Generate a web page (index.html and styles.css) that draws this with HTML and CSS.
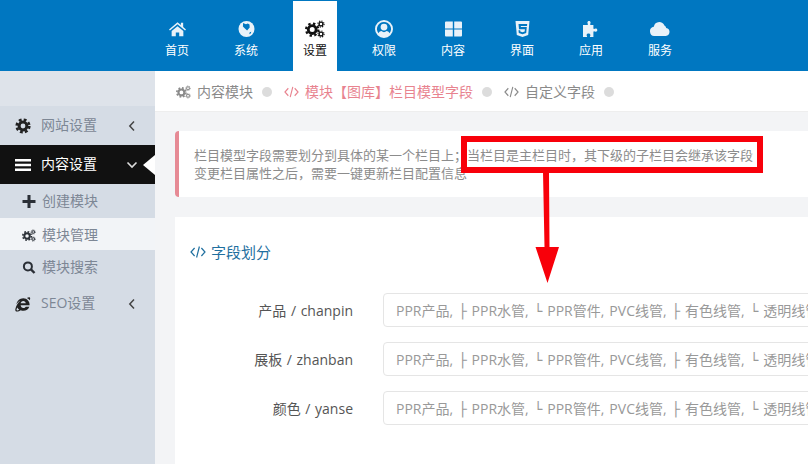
FILE: index.html
```html
<!DOCTYPE html>
<html lang="zh-CN">
<head>
<meta charset="utf-8">
<title>栏目模型字段</title>
<link rel="stylesheet" href="styles.css">
</head>
<body>
<svg class="defs" width="0" height="0" aria-hidden="true">
  <defs>
    <symbol id="cogs" viewBox="0 0 20 18">
      <circle cx="7.2" cy="9.6" r="3.9" fill="none" stroke="currentColor" stroke-width="2.8"/>
      <circle cx="7.2" cy="9.6" r="6.1" fill="none" stroke="currentColor" stroke-width="2.2" stroke-dasharray="2.4 2.4"/>
      <circle cx="16" cy="4" r="1.9" fill="none" stroke="currentColor" stroke-width="1.4"/>
      <circle cx="16" cy="4" r="3.1" fill="none" stroke="currentColor" stroke-width="1.1" stroke-dasharray="1.2 1.24"/>
      <circle cx="16" cy="14" r="1.9" fill="none" stroke="currentColor" stroke-width="1.4"/>
      <circle cx="16" cy="14" r="3.1" fill="none" stroke="currentColor" stroke-width="1.1" stroke-dasharray="1.2 1.24"/>
    </symbol>
    <symbol id="code" viewBox="0 0 16 14">
      <path d="M4.6 3 1 7l3.6 4M11.4 3 15 7l-3.600 4M9.400 1.500 6.600 12.500" fill="none" stroke="currentColor" stroke-width="1.2"/>
    </symbol>
    <symbol id="left" viewBox="0 0 8 12">
      <path d="M6 1.500 1.800 6 6 10.500" fill="none" stroke="currentColor" stroke-width="1.5"/>
    </symbol>
  </defs>
</svg>

<header class="topbar">
  <nav class="topnav">
    <a class="topnav-item">
      <svg class="topnav-icon" viewBox="0 0 18 16"><path fill="currentColor" d="M9 .8 0 8.400l1 1.200 8-6.700 8 6.700 1-1.200-3-2.600V1.400h-2.400v2.300zM2.800 10.200V15.600h4.400v-4h3.600v4h4.400v-5.400L9 5z"/></svg>
      <span>首页</span>
    </a>
    <a class="topnav-item">
      <svg class="topnav-icon" viewBox="0 0 16 16"><circle cx="8" cy="8" r="8" fill="currentColor"/><path fill="#0077c1" d="M4.600 1.900 7.400 3.200 9.300 2.600 11 3.400 11.200 6.600 8.600 9.600 6.400 7.400 4.400 5.600zM11.200 11.200l1.600-.4-.6 1.800-1.400.6z"/></svg>
      <span>系统</span>
    </a>
    <a class="topnav-item is-active">
      <svg class="topnav-icon topnav-icon-cogs"><use href="#cogs"/></svg>
      <span>设置</span>
    </a>
    <a class="topnav-item">
      <svg class="topnav-icon topnav-icon-user" viewBox="0 0 18 18"><path fill="currentColor" fill-rule="evenodd" d="M9 0a9 9 0 1 0 0 18A9 9 0 0 0 9 0zm0 2a7 7 0 0 1 5.600 11.200C13.800 11.900 12.600 11 11.600 11a3.900 3.900 0 0 1-5.200 0c-1 0-2.200.9-3 2.200A7 7 0 0 1 9 2zm0 1.700a3.400 3.400 0 1 0 0 6.800 3.400 3.400 0 0 0 0-6.800z"/></svg>
      <span>权限</span>
    </a>
    <a class="topnav-item">
      <svg class="topnav-icon" viewBox="0 0 17 15"><path fill="currentColor" d="M0 1a1 1 0 0 1 1-1h6.800v6.900H0zM9.200 0H16a1 1 0 0 1 1 1v5.900H9.200zM0 8.100h7.800V15H1a1 1 0 0 1-1-1zM9.200 8.100H17V14a1 1 0 0 1-1 1H9.200z"/></svg>
      <span>内容</span>
    </a>
    <a class="topnav-item">
      <svg class="topnav-icon" viewBox="0 0 14 16"><path fill="currentColor" fill-rule="evenodd" d="M0 0h14l-1.300 14L7 16l-5.700-2zM3 3l.5 5.300h5.900l-.2 2.300-2.200.7-2.200-.7-.1-1.300H3l.3 2.800L7 13.300l3.700-1.200.6-6H5.400l-.1-1.100h6.200l.2-2z"/></svg>
      <span>界面</span>
    </a>
    <a class="topnav-item">
      <svg class="topnav-icon" viewBox="0 0 17 16"><path fill="currentColor" d="M4.400 1.600C4.400.7 5.100 0 6 0s1.600.7 1.600 1.600c0 .9-.5 1.300-.5 1.900 0 .3.200.4.800.4h2.500v3.400c0 .5.300.7.600.7.500 0 1-.5 1.800-.5.900 0 1.500.7 1.500 1.600s-.6 1.600-1.500 1.600c-.8 0-1.300-.5-1.800-.5-.3 0-.6.200-.6.700V16H6.900c0-.9.500-1.300.5-2 0-1-.8-1.600-1.900-1.600S3.600 13 3.600 14c0 .7.500 1.100.5 2H0V3.900h3.600c.7 0 1.300-.1 1.300-.5 0-.6-.5-.9-.5-1.800z"/></svg>
      <span>应用</span>
    </a>
    <a class="topnav-item">
      <svg class="topnav-icon topnav-icon-cloud" viewBox="0 0 20 14"><path fill="currentColor" d="M5 14a4.700 4.700 0 0 1-1.200-9.300A5.800 5.800 0 0 1 9.200 0c2.400 0 4.400 1.400 5.200 3.500a3 3 0 0 1 1.800 2.400A4.100 4.100 0 0 1 15.800 14z"/></svg>
      <span>服务</span>
    </a>
  </nav>
</header>

<div class="layout">
  <aside class="sidebar">
    <ul class="menu">
      <li class="menu-item">
        <svg class="menu-icon" viewBox="0 0 16 16"><circle cx="8" cy="8" r="3.900" fill="none" stroke="currentColor" stroke-width="3"/><circle cx="8" cy="8" r="6.300" fill="none" stroke="currentColor" stroke-width="2.600" stroke-dasharray="2.800 2.140"/></svg>
        <span class="menu-label">网站设置</span>
        <svg class="menu-caret"><use href="#left"/></svg>
      </li>
      <li class="menu-item is-open">
        <svg class="menu-icon" viewBox="0 0 16 14"><path fill="currentColor" d="M0 1h16v2.400H0zM0 5.800h16v2.400H0zM0 10.600h16V13H0z"/></svg>
        <span class="menu-label">内容设置</span>
        <svg class="menu-caret" viewBox="0 0 12 8"><path d="M1.500 1.500 6 6l4.500-4.500" fill="none" stroke="currentColor" stroke-width="1.600"/></svg>
      </li>
      <li class="submenu-item">
        <svg class="sub-icon" viewBox="0 0 12 12"><path fill="currentColor" d="M4.600 0h2.800v4.600H12v2.800H7.400V12H4.600V7.400H0V4.600h4.600z"/></svg>
        <span>创建模块</span>
      </li>
      <li class="submenu-item is-current">
        <svg class="sub-icon"><use href="#cogs"/></svg>
        <span>模块管理</span>
      </li>
      <li class="submenu-item">
        <svg class="sub-icon" viewBox="0 0 13 13"><circle cx="5.400" cy="5.400" r="4" fill="none" stroke="currentColor" stroke-width="2"/><path d="M8.200 8.200 12 12" stroke="currentColor" stroke-width="2.400"/></svg>
        <span>模块搜索</span>
      </li>
      <li class="menu-item">
        <svg class="menu-icon" viewBox="0 0 17 16"><path fill="currentColor" fill-rule="evenodd" d="M8.800 2C5 2 2 5 1.500 8.600 2.400 7 4 5.300 5.800 4.400 3.200 6.800 1.200 10 .4 13.200c-.4 1.700.3 2.800 1.800 2.800 1.200 0 2.700-.6 3.900-1.400 1 .5 1.800.7 2.900.7 2.900 0 5.300-1.700 6.200-4.400h-3.800c-.5.9-1.400 1.400-2.500 1.400-1.600 0-2.800-1.200-2.900-2.900h9.500c.4-3.800-2.600-7.400-6.700-7.400zM6 7.200c.1-1.500 1.300-2.500 2.800-2.500 1.400 0 2.600 1 2.700 2.500zM1.900 14.600c-.5-.5-.2-1.700.5-3 .5 1 1.200 1.800 2.100 2.400-1.100.7-2 1-2.600.6zM12.600 1.600C14 .9 15.200.7 15.800 1.200c.5.500.4 1.600-.1 2.900-.7-1-1.700-1.900-3.100-2.500z"/></svg>
        <span class="menu-label">SEO设置</span>
        <svg class="menu-caret"><use href="#left"/></svg>
      </li>
    </ul>
  </aside>

  <main class="content">
    <div class="crumbs">
      <span class="crumb"><svg class="crumb-icon"><use href="#cogs"/></svg><span>内容模块</span><i class="crumb-dot"></i></span>
      <span class="crumb is-current"><svg class="crumb-icon"><use href="#code"/></svg><span>模块【图库】栏目模型字段</span><i class="crumb-dot"></i></span>
      <span class="crumb"><svg class="crumb-icon"><use href="#code"/></svg><span>自定义字段</span><i class="crumb-dot"></i></span>
    </div>

    <div class="page">
      <div class="notice">
        <p>栏目模型字段需要划分到具体的某一个栏目上；当栏目是主栏目时，其下级的子栏目会继承该字段</p>
        <p>变更栏目属性之后，需要一键更新栏目配置信息</p>
      </div>

      <section class="card">
        <h2 class="card-title"><svg class="card-title-icon"><use href="#code"/></svg>字段划分</h2>
        <form class="form">
          <div class="form-row">
            <label class="form-label">产品 / chanpin</label>
            <input class="form-input" type="text" placeholder="PPR产品, ├ PPR水管, └ PPR管件, PVC线管, ├ 有色线管, └ 透明线管">
          </div>
          <div class="form-row">
            <label class="form-label">展板 / zhanban</label>
            <input class="form-input" type="text" placeholder="PPR产品, ├ PPR水管, └ PPR管件, PVC线管, ├ 有色线管, └ 透明线管">
          </div>
          <div class="form-row">
            <label class="form-label">颜色 / yanse</label>
            <input class="form-input" type="text" placeholder="PPR产品, ├ PPR水管, └ PPR管件, PVC线管, ├ 有色线管, └ 透明线管">
          </div>
        </form>
      </section>
    </div>
  </main>
</div>

<svg class="annotation" width="808" height="464" viewBox="0 0 808 464" aria-hidden="true">
  <rect x="464" y="139" width="296" height="31" fill="none" stroke="#f8000a" stroke-width="6"/>
  <path fill="#f8000a" d="M543 172h6l.5 75h9.500l-11.500 36-12-36h9z"/>
</svg>
</body>
</html>
```
FILE: styles.css
```css
* { box-sizing: border-box; }

html, body {
  margin: 0;
  width: 808px;
  height: 464px;
  overflow: hidden;
}

body {
  position: relative;
  display: flex;
  flex-direction: column;
  font-family: "Open Sans", "DejaVu Sans", "Noto Sans CJK SC", sans-serif;
  font-size: 14px;
  line-height: 20px;
  color: #666;
  background: #f3f4f6;
}

.defs { position: absolute; }

/* Top bar */
.topbar {
  flex: none;
  height: 71px;
  padding-top: 1px;
  background: #0077c1;
}

.topnav {
  display: flex;
  gap: 25px;
  height: 70px;
  padding-left: 155px;
}

.topnav-item {
  display: flex;
  flex-direction: column;
  align-items: center;
  width: 44px;
  height: 70px;
  padding-top: 20px;
  color: #fff;
  font-size: 12px;
  line-height: 16px;
}

.topnav-item span { margin-top: 6px; }

.topnav-item.is-active {
  background: #fff;
  color: #111;
}

.topnav-icon {
  flex: none;
  width: 17px;
  height: 16px;
  color: #e9f2f9;
}

.is-active .topnav-icon { color: #111; }
.topnav-icon-cogs { width: 20px; height: 18px; margin: -1px 0; }
.topnav-icon-cloud { width: 20px; height: 14px; margin: 1px 0; }
.topnav-icon-user { width: 18px; height: 18px; margin: -1px 0; }

/* Layout */
.layout {
  flex: 1;
  display: flex;
  min-height: 0;
}

/* Sidebar */
.sidebar {
  flex: none;
  width: 155px;
  padding-top: 35px;
  background: linear-gradient(#dee3ea 35px, #d5dce5 35px);
}

.menu {
  margin: 0;
  padding: 0;
  list-style: none;
}

.menu-item {
  position: relative;
  display: flex;
  align-items: center;
  height: 39px;
  padding-left: 15px;
  color: #7d8795;
}

.menu-icon {
  flex: none;
  width: 16px;
  height: 16px;
  margin-right: 10px;
  color: #222;
}

.menu-label {
  flex: 1;
  padding-bottom: 2px;
}

.menu-caret {
  flex: none;
  width: 8px;
  height: 12px;
  margin-right: 19px;
  color: #444;
}

.menu-item.is-open {
  background: #111;
  color: #fff;
}

.is-open .menu-icon { color: #fff; height: 14px; }
.is-open .menu-caret { width: 12px; height: 8px; margin-right: 17px; color: #ddd; }

.is-open::after {
  content: "";
  position: absolute;
  right: 0;
  top: 10px;
  border-style: solid;
  border-width: 10px 12px 10px 0;
  border-color: transparent #fff transparent transparent;
}

.submenu-item {
  display: flex;
  align-items: center;
  height: 33px;
  padding-left: 22px;
  color: #7d8795;
}

.submenu-item.is-current {
  background: #f2f4f7;
  height: 32px;
  padding-top: 2px;
}

.submenu-item:nth-child(3), .submenu-item:nth-child(5) { height: 34px; }

.sub-icon {
  flex: none;
  width: 14px;
  height: 13px;
  margin-right: 6px;
  color: #2a2f36;
}

/* Main */
.content {
  flex: 1;
  min-width: 0;
  overflow: hidden;
}

.crumbs {
  display: flex;
  align-items: center;
  gap: 12px;
  height: 41px;
  padding-top: 2px;
  padding-left: 21px;
  background: #fff;
  border-bottom: 1px solid #eee;
  color: #8a8a8a;
}

.crumb {
  display: flex;
  align-items: center;
  white-space: nowrap;
}

.crumb.is-current { color: #e8838f; }

.crumb-icon {
  flex: none;
  width: 15px;
  height: 14px;
  margin-right: 6px;
}

.crumb-dot {
  flex: none;
  width: 10px;
  height: 10px;
  margin-left: 9px;
  border-radius: 50%;
  background: #dcdcdc;
}

.page {
  padding: 19px 0 0 20px;
  width: 760px;
}

.notice {
  width: 720px;
  height: 66px;
  padding: 15px 0 0 15px;
  border-left: 4px solid #e68a95;
  border-radius: 4px;
  background: #fff;
  color: #8c8c8c;
  font-size: 13px;
  line-height: 18px;
  white-space: nowrap;
}

.notice p { margin: 0; }

.card {
  width: 720px;
  height: 260px;
  margin-top: 20px;
  padding-top: 24px;
  background: #fff;
}

.card-title {
  display: flex;
  align-items: center;
  height: 22px;
  margin: 0 0 30px;
  padding-left: 15px;
  color: #1f6f9f;
  font-size: 15px;
  font-weight: 400;
}

.card-title-icon {
  flex: none;
  width: 16px;
  height: 14px;
  margin-right: 5px;
}

.form {
  display: flex;
  flex-direction: column;
  gap: 15px;
}

.form-row {
  display: flex;
  align-items: center;
  gap: 30px;
}

.form-label {
  flex: none;
  width: 178px;
  padding-top: 2px;
  text-align: right;
  color: #555;
  white-space: nowrap;
  word-spacing: 1px;
}

.form-input {
  flex: none;
  width: 500px;
  height: 34px;
  padding: 0 12px;
  border: 1px solid #e5e5e5;
  border-radius: 4px;
  background: #fff;
  font: inherit;
  word-spacing: 1.4px;
}

.form-input::placeholder {
  color: #999;
  opacity: 1;
}

/* Annotation drawn over the screenshot */
.annotation {
  position: absolute;
  left: 0;
  top: 0;
  pointer-events: none;
}
```
